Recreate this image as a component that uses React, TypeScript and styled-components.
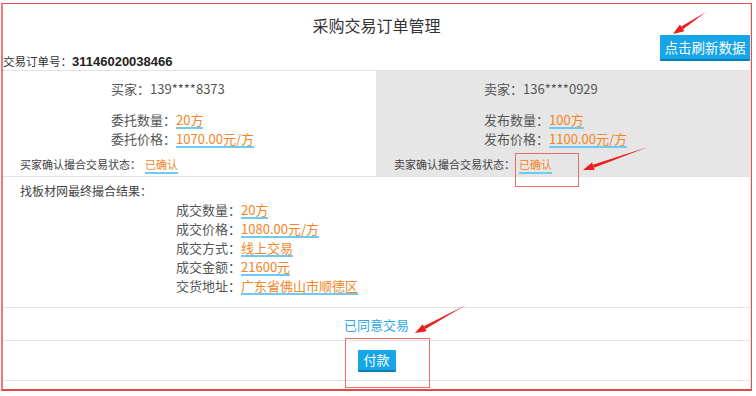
import React from 'react';
import styled, { createGlobalStyle } from 'styled-components';

const GlobalStyle = createGlobalStyle`
  html, body {
    margin: 0;
    padding: 0;
    background: #fff;
  }
  body {
    font-family: "Noto Sans CJK SC", "Liberation Sans", sans-serif;
    color: #444;
  }
`;

const Frame = styled.div`
  position: relative;
  box-sizing: border-box;
  margin: 3px 0 0 1px;
  width: 751px;
  height: 388px;
  border-top: 1px solid #e85050;
  border-right: 1px solid #e85050;
  border-bottom: 2px solid #e64848;
  border-left: 2px solid #f07878;
`;

const Inner = styled.div`
  box-sizing: border-box;
  height: 100%;
  border-right: 1px solid #e4e4e4;
  display: flex;
  flex-direction: column;
`;

const TitleRow = styled.div`
  box-sizing: border-box;
  height: 31px;
  padding-top: 11px;
  text-align: center;
  font-size: 16px;
  line-height: 20px;
  color: #333;
`;

const OrderRow = styled.div`
  height: 35px;
  display: flex;
  justify-content: space-between;
  align-items: flex-start;
  border-bottom: 1px solid #e3e3e3;
`;

const OrderNo = styled.div`
  align-self: flex-end;
  font-size: 11.5px;
  line-height: 16px;
  color: #333;
  b {
    font-family: "Liberation Sans", sans-serif;
    font-size: 13px;
    font-weight: bold;
    color: #222;
  }
`;

const BlueButton = styled.button<{ $size?: 'lg' | 'sm' }>`
  border: none;
  border-bottom: 2px solid #0b7fb5;
  border-radius: 1px;
  background: #16a5e6;
  color: #fff;
  font-family: "Noto Sans CJK SC", sans-serif;
  cursor: pointer;
  padding: 0;
  height: ${(p) => (p.$size === 'lg' ? '26px' : '22px')};
  width: ${(p) => (p.$size === 'lg' ? '90px' : '38px')};
  font-size: ${(p) => (p.$size === 'lg' ? '13.5px' : '13px')};
  line-height: 20px;
`;

const Parties = styled.div`
  display: grid;
  grid-template-columns: 373px 1fr;
  height: 105px;
  border-bottom: 1px solid #e3e3e3;
`;

const PartyCol = styled.div<{ $grey?: boolean }>`
  background: ${(p) => (p.$grey ? '#e6e6e6' : '#fff')};
  padding-top: 8px;
  display: flex;
  flex-direction: column;
`;

const InfoBlock = styled.div`
  padding-left: 108px;
  font-size: 13px;
  line-height: 19px;
  color: #555;
`;

const PartyName = styled.div`
  margin-bottom: 12px;
`;

const Value = styled.span`
  display: inline-block;
  color: #f5841f;
  border-bottom: 2px solid #6ccaf3;
  line-height: 15px;
`;

const StatusLine = styled.div<{ $indent: number }>`
  margin-top: 7px;
  padding-left: ${(p) => p.$indent}px;
  font-size: 11px;
  line-height: 18px;
  color: #444;
  span {
    margin-left: 4px;
  }
`;

const Result = styled.div`
  padding: 4px 0 12px 17px;
  border-bottom: 1px solid #e3e3e3;
`;

const ResultHead = styled.div`
  font-size: 12px;
  line-height: 19px;
  color: #444;
`;

const ResultList = styled.div`
  padding-left: 156px;
  font-size: 13px;
  line-height: 19px;
  color: #555;
`;

const AgreeRow = styled.div`
  height: 32px;
  display: flex;
  align-items: center;
  justify-content: center;
  font-size: 13px;
  color: #2aa8e2;
  border-bottom: 1px solid #e3e3e3;
`;

const PayRow = styled.div`
  height: 39px;
  display: flex;
  align-items: center;
  justify-content: center;
  border-bottom: 1px solid #e3e3e3;
`;

const Marks = styled.svg`
  position: absolute;
  left: -3px;
  top: -4px;
  width: 756px;
  height: 396px;
  pointer-events: none;
`;

function Arrow({ x1, y1, x2, y2 }: { x1: number; y1: number; x2: number; y2: number }) {
  const dx = x2 - x1;
  const dy = y2 - y1;
  const len = Math.hypot(dx, dy);
  const ux = dx / len;
  const uy = dy / len;
  const bx = x2 - ux * 11;
  const by = y2 - uy * 11;
  const px = -uy * 4;
  const py = ux * 4;
  return (
    <g fill="#ee1c1c" stroke="none">
      <polygon points={`${x1},${y1} ${bx + px * 0.4},${by + py * 0.4} ${bx - px * 0.4},${by - py * 0.4}`} />
      <polygon points={`${x2},${y2} ${bx + px},${by + py} ${bx - px},${by - py}`} />
    </g>
  );
}

const buyer = [
  { label: '委托数量：', value: '20方' },
  { label: '委托价格：', value: '1070.00元/方' },
];
const seller = [
  { label: '发布数量：', value: '100方' },
  { label: '发布价格：', value: '1100.00元/方' },
];
const deal = [
  { label: '成交数量：', value: '20方' },
  { label: '成交价格：', value: '1080.00元/方' },
  { label: '成交方式：', value: '线上交易' },
  { label: '成交金额：', value: '21600元' },
  { label: '交货地址：', value: '广东省佛山市顺德区' },
];

export default function App() {
  return (
    <>
      <GlobalStyle />
      <Frame>
        <Inner>
          <TitleRow>采购交易订单管理</TitleRow>
          <OrderRow>
            <OrderNo>
              交易订单号：<b>31146020038466</b>
            </OrderNo>
            <BlueButton $size="lg">点击刷新数据</BlueButton>
          </OrderRow>
          <Parties>
            <PartyCol>
              <InfoBlock>
                <PartyName>买家：139****8373</PartyName>
                {buyer.map((r) => (
                  <div key={r.label}>
                    {r.label}
                    <Value>{r.value}</Value>
                  </div>
                ))}
              </InfoBlock>
              <StatusLine $indent={17}>
                买家确认撮合交易状态：<Value>已确认</Value>
              </StatusLine>
            </PartyCol>
            <PartyCol $grey>
              <InfoBlock>
                <PartyName>卖家：136****0929</PartyName>
                {seller.map((r) => (
                  <div key={r.label}>
                    {r.label}
                    <Value>{r.value}</Value>
                  </div>
                ))}
              </InfoBlock>
              <StatusLine $indent={18}>
                卖家确认撮合交易状态：<Value>已确认</Value>
              </StatusLine>
            </PartyCol>
          </Parties>
          <Result>
            <ResultHead>找板材网最终撮合结果：</ResultHead>
            <ResultList>
              {deal.map((r) => (
                <div key={r.label}>
                  {r.label}
                  <Value>{r.value}</Value>
                </div>
              ))}
            </ResultList>
          </Result>
          <AgreeRow>已同意交易</AgreeRow>
          <PayRow>
            <BlueButton $size="sm">付款</BlueButton>
          </PayRow>
        </Inner>
        <Marks viewBox="0 0 756 396">
          <Arrow x1={706} y1={12} x2={673} y2={34} />
          <Arrow x1={648} y1={147} x2={583} y2={170} />
          <Arrow x1={466} y1={305} x2={415} y2={333} />
          <rect x={515.5} y={153.5} width={63} height={33} fill="none" stroke="#ef6a6a" strokeWidth={1} />
          <rect x={345.5} y={338.5} width={84} height={49} fill="none" stroke="#ef6a6a" strokeWidth={1} />
        </Marks>
      </Frame>
    </>
  );
}
